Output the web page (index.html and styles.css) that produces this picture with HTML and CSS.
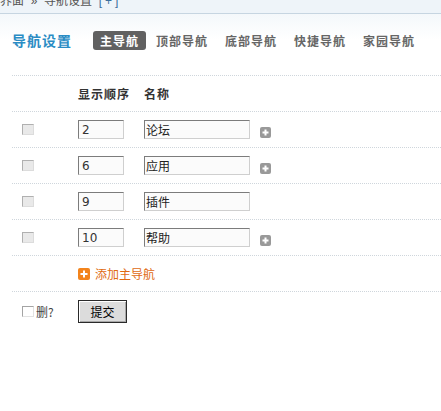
FILE: index.html
```html
<!DOCTYPE html>
<html lang="zh">
<head>
<meta charset="utf-8">
<title>导航设置</title>
<link rel="stylesheet" href="styles.css">
</head>
<body>
<div class="topbar">
  <div class="crumb">界面 <span class="sep">»</span> 导航设置 <a class="add-crumb" href="#">[+]</a></div>
</div>
<div class="main">
  <div class="titlebar">
    <h3 class="title">导航设置</h3>
    <ul class="tabs">
      <li class="tab active">主导航</li>
      <li class="tab">顶部导航</li>
      <li class="tab">底部导航</li>
      <li class="tab">快捷导航</li>
      <li class="tab">家园导航</li>
    </ul>
  </div>
  <div class="list">
    <div class="row head">
      <div class="c1"></div>
      <div class="c2">显示顺序</div>
      <div class="c3">名称</div>
    </div>
    <div class="row">
      <div class="c1"><input type="checkbox" class="chk dis" disabled></div>
      <div class="c2"><input class="txt order" value="2"></div>
      <div class="c3"><input class="txt name" value="论坛"><span class="plus"><svg width="11" height="11" viewBox="0 0 11 11"><rect width="11" height="11" rx="2" fill="#999"/><path d="M5.5 2.5v6M2.5 5.5h6" stroke="#fff" stroke-width="2"/></svg></span></div>
    </div>
    <div class="row">
      <div class="c1"><input type="checkbox" class="chk dis" disabled></div>
      <div class="c2"><input class="txt order" value="6"></div>
      <div class="c3"><input class="txt name" value="应用"><span class="plus"><svg width="11" height="11" viewBox="0 0 11 11"><rect width="11" height="11" rx="2" fill="#999"/><path d="M5.5 2.5v6M2.5 5.5h6" stroke="#fff" stroke-width="2"/></svg></span></div>
    </div>
    <div class="row">
      <div class="c1"><input type="checkbox" class="chk dis" disabled></div>
      <div class="c2"><input class="txt order" value="9"></div>
      <div class="c3"><input class="txt name" value="插件"></div>
    </div>
    <div class="row">
      <div class="c1"><input type="checkbox" class="chk dis" disabled></div>
      <div class="c2"><input class="txt order" value="10"></div>
      <div class="c3"><input class="txt name" value="帮助"><span class="plus"><svg width="11" height="11" viewBox="0 0 11 11"><rect width="11" height="11" rx="2" fill="#999"/><path d="M5.5 2.5v6M2.5 5.5h6" stroke="#fff" stroke-width="2"/></svg></span></div>
    </div>
    <div class="row addrow">
      <div class="c1"></div>
      <div class="c23"><a class="addnav" href="#"><svg width="12" height="12" viewBox="0 0 12 12"><rect width="12" height="12" rx="2" fill="#f3841c"/><path d="M6 2.5v7M2.5 6h7" stroke="#fff" stroke-width="2"/></svg>添加主导航</a></div>
    </div>
    <div class="row foot">
      <div class="c1"><label class="del"><input type="checkbox" class="chk"> 删?</label></div>
      <div class="c23"><button class="btn" type="button">提交</button></div>
    </div>
  </div>
</div>
</body>
</html>
```
FILE: styles.css
```css
html, body {
  margin: 0;
  padding: 0;
}
body {
  width: 441px;
  height: 411px;
  overflow: hidden;
  background: linear-gradient(#f4f8fb 14px, #ffffff 40px);
  font-family: "Noto Sans CJK SC", "DejaVu Sans", sans-serif;
  font-size: 12px;
  color: #333;
}
.topbar {
  height: 13px;
  overflow: hidden;
  background: #eef4f9;
  border-bottom: 1px solid #c6d5e1;
}
.crumb {
  margin-top: -6px;
  line-height: 12px;
  color: #555;
  white-space: nowrap;
  word-spacing: 4px;
}
.crumb .sep {
  font-family: "Liberation Sans", sans-serif;
}
.add-crumb {
  color: #3a6e9c;
  text-decoration: none;
  letter-spacing: 3px;
  font-family: "Liberation Sans", sans-serif;
}
.main {
  padding-left: 12px;
}
.titlebar {
  display: flex;
  align-items: center;
  height: 19px;
  margin-top: 17px;
}
.title {
  margin: 0 21px 0 0;
  font-size: 14px;
  letter-spacing: 1px;
  font-weight: bold;
  color: #2a8cc4;
  line-height: 19px;
}
.tabs {
  display: flex;
  gap: 3px;
  margin: 0;
  padding: 0;
  list-style: none;
}
.tab {
  padding: 0 7px 0 7px;
  height: 19px;
  line-height: 19px;
  font-weight: bold;
  letter-spacing: 1px;
  color: #666;
  border-radius: 3px;
}
.tab.active {
  background: #616161;
  color: #fff;
}
.list {
  margin-top: 25px;
  border-top: 1px dotted #cfd6dc;
}
.row {
  display: grid;
  grid-template-columns: 66px 66px 1fr;
  align-items: center;
  height: 35px;
  border-bottom: 1px dotted #cfd6dc;
}
.row.head {
  font-weight: bold;
  letter-spacing: 1px;
  color: #333;
}
.c1 {
  padding-left: 10px;
  display: flex;
  align-items: center;
}
.c3 {
  display: flex;
  align-items: center;
}
.c23 {
  grid-column: 2 / 4;
  display: flex;
  align-items: center;
}
.chk {
  appearance: none;
  -webkit-appearance: none;
  box-sizing: border-box;
  width: 12px;
  height: 11px;
  margin: 0;
  border: 1px solid;
  border-color: #a4a4a4 #e2e2e2 #e2e2e2 #a4a4a4;
  background: #fff;
}
.chk.dis {
  background: #e9e9e9;
  border-color: #b0b0b0 #dcdcdc #dcdcdc #b0b0b0;
}
.txt {
  box-sizing: border-box;
  height: 19px;
  margin: 0;
  padding: 0 2px;
  border: 1px solid;
  border-color: #7c7c7c #cfcfcf #cfcfcf #7c7c7c;
  background: #fbfbfb;
  font-size: 12px;
  color: #222;
  outline: none;
}
.txt.order {
  width: 46px;
  font-family: "DejaVu Sans", sans-serif;
  padding-left: 3px;
  color: #333;
}
.txt.name {
  width: 106px;
  padding-left: 1px;
  font-family: "Noto Sans CJK SC", sans-serif;
}
.plus {
  display: flex;
  margin-left: 10px;
  margin-top: 5px;
}
.addnav {
  display: flex;
  align-items: center;
  gap: 5px;
  color: #e06a12;
  text-decoration: none;
}
.row.foot {
  border-bottom: none;
  height: auto;
  padding-top: 8px;
}
.del {
  display: flex;
  align-items: center;
  gap: 2px;
  color: #444;
  white-space: nowrap;
}
.btn {
  box-sizing: border-box;
  width: 49px;
  height: 23px;
  margin: 0;
  padding: 0;
  border: 1px solid #2a2a2a;
  background: #dcdcdc;
  box-shadow: inset 1px 1px 0 #fff, inset -1px -1px 0 #a8a8a8;
  font-family: "Noto Sans CJK SC", sans-serif;
  font-size: 12px;
  color: #000;
}
```
